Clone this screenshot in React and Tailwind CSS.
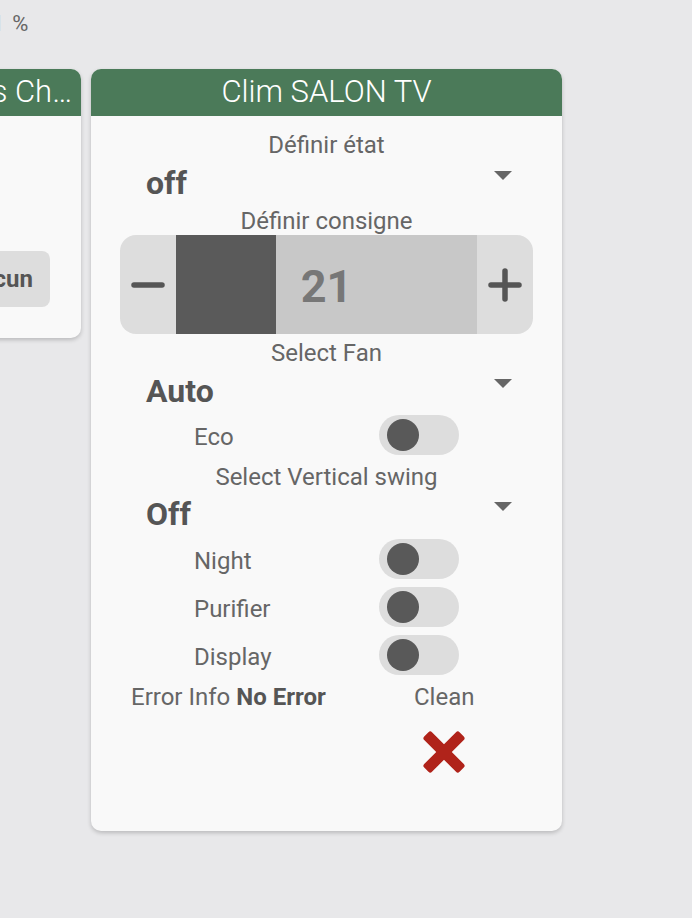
import React from 'react';

const Caret = () => (
  <svg width="18" height="9" viewBox="0 0 18 9" className="mt-[7px] shrink-0">
    <polygon points="0,0 18,0 9,9" fill="#666666" />
  </svg>
);

const Label = ({ children, className = '' }) => (
  <div className={`h-[28px] text-center text-[24px] leading-[28px] text-[#666666] ${className}`}>{children}</div>
);

const SelectRow = ({ value, className = '' }) => (
  <div className={`flex h-[38px] items-start justify-between pl-[55px] pr-[50px] ${className}`}>
    <span className="text-[32px] font-bold leading-[38px] text-[#555555]">{value}</span>
    <Caret />
  </div>
);

const Toggle = () => (
  <div className="flex h-[40px] w-[80px] items-center rounded-full bg-[#dddddd] pl-[8px]">
    <div className="h-[32px] w-[32px] rounded-full bg-[#595959]" />
  </div>
);

const SwitchRow = ({ label, className = '' }) => (
  <div className={`flex h-[40px] items-center pl-[103px] ${className}`}>
    <span className="w-[185px] pt-[4px] text-[24px] leading-[28px] text-[#666666]">{label}</span>
    <Toggle />
  </div>
);

const App = () => {
  return (
    <div className="min-h-screen overflow-hidden bg-[#e8e8ea] pt-[12px] font-['Roboto',sans-serif]">
      {/* bit of the previous row, scrolled off */}
      <div className="-ml-[4px] flex h-[24px] text-[22px] leading-[24px] text-[#666666]">
        <span>l</span>
        <span className="ml-[11px]">%</span>
      </div>

      <div className="mt-[33px] -ml-[390px] flex items-start gap-[10px]">
        {/* Previous card, mostly off screen */}
        <div className="w-[471px] shrink-0 rounded-[10px] bg-[#f9f9f9] shadow-[0_2px_4px_rgba(0,0,0,0.2)]">
          <div className="flex h-[47px] items-center rounded-t-[10px] bg-[#4b7a59] pl-[19px] pr-[2px] text-[31px] font-light text-white">
            <span className="truncate">Détecteurs d'ouvertures des Chambres</span>
          </div>
          <div className="h-[222px] pt-[135px]">
            <div className="flex justify-end pr-[31px]">
              <div className="flex h-[56px] items-center rounded-[8px] bg-[#dddddd] pl-[16px] pr-[17px] text-[24px] font-bold text-[#555555]">
                Aucun
              </div>
            </div>
          </div>
        </div>

        {/* Clim card */}
        <div className="w-[471px] shrink-0 rounded-[10px] bg-[#f9f9f9] pb-[57px] shadow-[0_2px_4px_rgba(0,0,0,0.2)]">
          <div className="flex h-[47px] items-center justify-center rounded-t-[10px] bg-[#4b7a59] text-[31px] font-light text-white">
            Clim SALON TV
          </div>

          <Label className="mt-[15px]">Définir état</Label>
          <SelectRow value="off" className="mt-[5px]" />

          <Label className="mt-[5px]">Définir consigne</Label>
          <div className="mx-[29px] flex h-[99px] overflow-hidden rounded-[16px] bg-[#dddddd]">
            <div className="flex w-[56px] items-center justify-center">
              <svg width="34" height="8" viewBox="0 0 34 8">
                <line x1="3" y1="4" x2="31" y2="4" stroke="#555555" strokeWidth="5.5" strokeLinecap="round" />
              </svg>
            </div>
            <div className="relative flex flex-1 items-center justify-center bg-[#c8c8c8]">
              <div className="absolute inset-y-0 left-0 w-[100px] bg-[#5a5a5a]" />
              <span className="relative pt-[4px] text-[45px] font-bold text-[#777777]">21</span>
            </div>
            <div className="flex w-[56px] items-center justify-center">
              <svg width="34" height="34" viewBox="0 0 34 34">
                <line x1="3" y1="17" x2="31" y2="17" stroke="#555555" strokeWidth="5.5" strokeLinecap="round" />
                <line x1="17" y1="3" x2="17" y2="31" stroke="#555555" strokeWidth="5.5" strokeLinecap="round" />
              </svg>
            </div>
          </div>

          <Label className="mt-[5px]">Select Fan</Label>
          <SelectRow value="Auto" className="mt-[5px]" />
          <SwitchRow label="Eco" className="mt-[5px]" />

          <Label className="mt-[8px]">Select Vertical swing</Label>
          <SelectRow value="Off" className="mt-[4px]" />
          <SwitchRow label="Night" className="mt-[6px]" />
          <SwitchRow label="Purifier" className="mt-[8px]" />
          <SwitchRow label="Display" className="mt-[8px]" />

          <div className="mt-[8px] grid grid-cols-2">
            <div className="pl-[40px] text-[24px] leading-[28px] text-[#666666]">
              Error Info <span className="font-bold text-[#555555]">No Error</span>
            </div>
            <div className="flex flex-col items-center">
              <span className="text-[24px] leading-[28px] text-[#666666]">Clean</span>
              <svg width="44" height="44" viewBox="0 0 44 44" className="mt-[19px]">
                <rect x="-3" y="16.5" width="50" height="11" rx="2.5" fill="#b0231a" transform="rotate(45 22 22)" />
                <rect x="-3" y="16.5" width="50" height="11" rx="2.5" fill="#b0231a" transform="rotate(-45 22 22)" />
              </svg>
            </div>
          </div>
        </div>
      </div>
    </div>
  );
};

export default App;
